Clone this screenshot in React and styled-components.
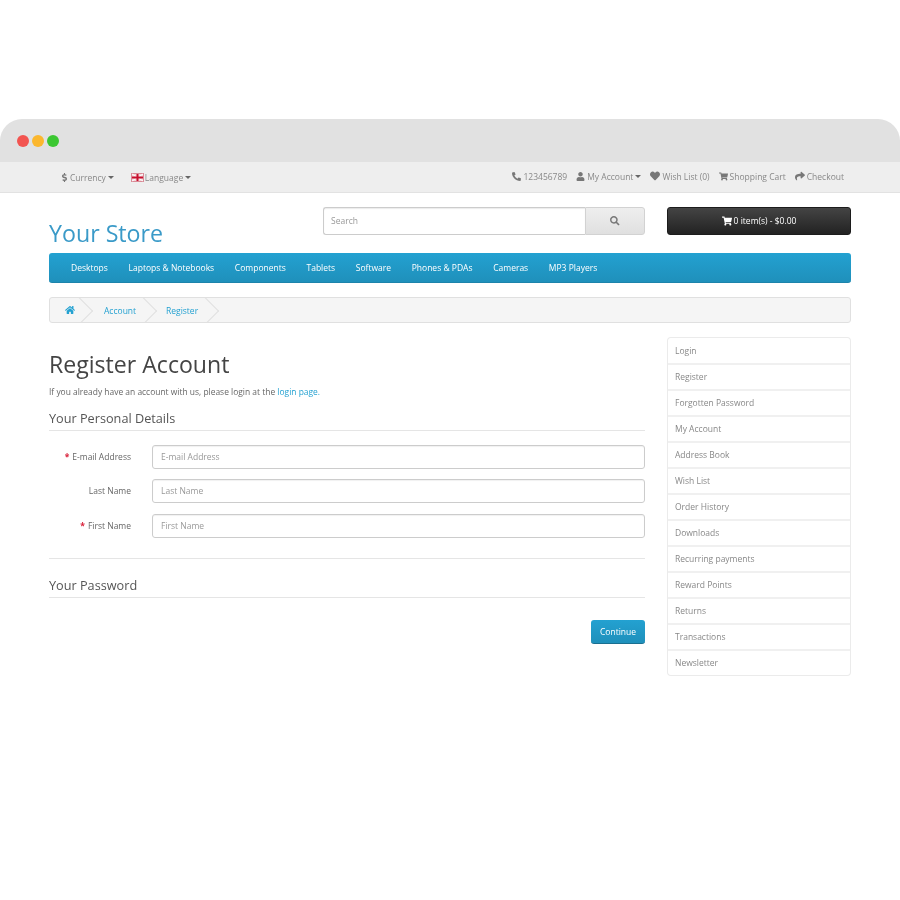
import React from 'react';
import styled, { createGlobalStyle } from 'styled-components';
import { FaPhoneAlt, FaUser, FaHeart, FaShoppingCart, FaShare, FaHome, FaSearch, FaDollarSign } from 'react-icons/fa';

const Global = createGlobalStyle`
  html, body { margin: 0; padding: 0; background: #fff; }
  body { font-family: "Open Sans", "Liberation Sans", sans-serif; font-size: 8.5px; color: #666; }
  * { box-sizing: border-box; }
`;

const Page = styled.div`
  width: 900px;
  height: 900px;
  padding-top: 119px;
  overflow: hidden;
  filter: blur(0.3px);
`;
const Chrome = styled.div`
  height: 43px;
  background: #e1e1e1;
  border-radius: 22px 22px 0 0;
  display: flex;
  align-items: center;
  gap: 3px;
  padding: 1px 0 0 17px;
`;
const Dot = styled.span`
  width: 12px;
  height: 12px;
  border-radius: 50%;
  background: ${p => p.$color};
`;
const TopBar = styled.div`
  height: 31px;
  background: #eee;
  border-bottom: 1px solid #e2e2e2;
  display: flex;
  align-items: center;
  justify-content: space-between;
  padding: 0 56px 2px 60px;
  color: #888;
`;
const TopGroup = styled.div`
  display: flex;
  align-items: center;
  gap: ${p => p.$gap}px;
`;
const TopItem = styled.span`
  display: inline-flex;
  align-items: center;
  gap: 2px;
  white-space: nowrap;
  font-size: 8.5px;
  transform: translateY(${p => p.$dy || 0}px);
  svg { font-size: ${p => p.$icon || 9}px; color: #777; }
`;
const Dollar = styled(FaDollarSign)`
  margin-right: -1px;
`;
const FlagIcon = styled.svg`
  margin-right: -1px;
`;
const Caret = styled.span`
  width: 0;
  height: 0;
  border-left: 3px solid transparent;
  border-right: 3px solid transparent;
  border-top: 3px solid #666;
`;
const Main = styled.div`
  padding: 14px 49px 0;
`;
const Header = styled.div`
  display: flex;
  align-items: flex-start;
  height: 46px;
`;
const Logo = styled.div`
  width: 274px;
  padding-top: 11px;
  font-size: 23.2px;
  line-height: 30px;
  color: #3a9ac8;
`;
const Search = styled.div`
  width: 322px;
  height: 28px;
  display: flex;
`;
const SearchInput = styled.div`
  flex: 1;
  border: 1px solid #ccc;
  border-right: 0;
  border-radius: 3px 0 0 3px;
  padding: 0 7px;
  line-height: 26px;
  font-size: 8.5px;
  color: #999;
  box-shadow: inset 0 1px 1px rgba(0,0,0,.08);
`;
const SearchButton = styled.div`
  width: 60px;
  border: 1px solid #d2d2d2;
  border-radius: 0 3px 3px 0;
  background: linear-gradient(#eee, #e0e0e0);
  display: flex;
  align-items: center;
  justify-content: center;
  color: #777;
  font-size: 9.5px;
`;
const Cart = styled.div`
  margin-left: 22px;
  width: 184px;
  height: 28px;
  padding-bottom: 1px;
  border-radius: 3px;
  background: linear-gradient(#444, #222);
  border: 1px solid #1c1c1c;
  color: #fff;
  display: flex;
  align-items: center;
  justify-content: center;
  gap: 2px;
  font-size: 8.5px;
  svg { font-size: 10px; }
`;
const Nav = styled.nav`
  height: 30px;
  border-radius: 3px;
  background: linear-gradient(#23a1d1, #1f90bb);
  border-bottom: 1px solid #1d84ab;
  display: flex;
  align-items: center;
  gap: 20.700px;
  padding: 0 22px 1px;
`;
const NavLink = styled.a`
  color: #fff;
  font-size: 8.5px;
  white-space: nowrap;
`;
const Crumbs = styled.div`
  margin-top: 14px;
  height: 26px;
  border: 1px solid #e0e0e0;
  border-radius: 3px;
  background: #f5f5f5;
  display: flex;
  align-items: center;
  overflow: hidden;
`;
const Crumb = styled.a`
  position: relative;
  height: 100%;
  width: ${p => p.$w}px;
  padding-left: ${p => p.$pad}px;
  display: flex;
  align-items: center;
  color: #23a1d1;
  font-size: 8.5px;
  &::after {
    content: '';
    position: absolute;
    right: 0;
    top: 2.500px;
    width: 19px;
    height: 19px;
    border-top: 1px solid #e0e0e0;
    border-right: 1px solid #e0e0e0;
    transform: rotate(45deg);
  }
`;
const Columns = styled.div`
  display: flex;
  gap: 22px;
  margin-top: 15px;
`;
const Content = styled.div`
  width: 596px;
`;
const Title = styled.h1`
  margin: 10px 0 0;
  font-size: 23.1px;
  line-height: 32px;
  font-weight: 400;
  color: #444;
`;
const Intro = styled.p`
  margin: 5px 0 0;
  font-size: 8.450px;
  line-height: 13px;
  color: #666;
`;
const InlineLink = styled.a`
  color: #23a1d1;
`;
const Legend = styled.div`
  margin-top: ${p => p.$top}px;
  font-size: 12.7px;
  line-height: 18px;
  height: 26px;
  padding-top: 4px;
  color: #555;
  border-bottom: 1px solid #e5e5e5;
`;
const Fields = styled.div`
  display: flex;
  flex-direction: column;
  gap: 10.500px;
  margin-top: 13.500px;
  padding-bottom: 20.500px;
  border-bottom: 1px solid #e5e5e5;
`;
const Field = styled.div`
  display: flex;
  align-items: center;
  height: 24px;
`;
const Label = styled.label`
  width: 82px;
  padding-bottom: 1px;
  text-align: right;
  font-size: 8.5px;
  color: #666;
  flex: none;
`;
const Star = styled.span`
  color: #d9233c;
  font-weight: 700;
  margin-right: 3px;
`;
const Input = styled.div`
  margin-left: 21px;
  width: 493px;
  height: 24px;
  border: 1px solid #ccc;
  border-radius: 3px;
  padding: 0 8px;
  line-height: 22px;
  font-size: 8.5px;
  color: #999;
  box-shadow: inset 0 1px 1px rgba(0,0,0,.06);
`;
const Actions = styled.div`
  display: flex;
  justify-content: flex-end;
  margin-top: 22px;
`;
const Continue = styled.button`
  width: 54px;
  height: 24px;
  padding: 0;
  border: 0;
  border-bottom: 1px solid #1a6f90;
  border-radius: 3px;
  background: linear-gradient(#23a1d1, #1f90bb);
  color: #fff;
  font: 8.5px "Open Sans", sans-serif;
`;
const Aside = styled.aside`
  width: 182px;
  margin-left: 1px;
  border-radius: 3px;
  box-shadow: 0 0 0 1px #ebebeb;
  align-self: flex-start;
`;
const AsideLink = styled.a`
  display: block;
  height: 26px;
  line-height: 23px;
  padding: 0 7px;
  font-size: 8.5px;
  color: #888;
  border-top: 2px solid #f0f0f0;
  &:first-child {
    height: 25px;
    line-height: 25px;
    border-top: 0;
  }
`;

const Flag = () => (
  <FlagIcon width="13" height="9" viewBox="0 0 13 9" aria-hidden="true">
    <rect width="13" height="9" fill="#d98a96" />
    <rect x="1" y="1" width="11" height="7" fill="#f3d6da" />
    <path d="M1 1l11 7M12 1L1 8" stroke="#fff" strokeWidth="1" />
    <path d="M6.500 1v7M1 4.500h11" stroke="#c8102e" strokeWidth="2" />
  </FlagIcon>
);

const navItems = ['Desktops', 'Laptops & Notebooks', 'Components', 'Tablets', 'Software', 'Phones & PDAs', 'Cameras', 'MP3 Players'];
const asideItems = ['Login', 'Register', 'Forgotten Password', 'My Account', 'Address Book', 'Wish List', 'Order History', 'Downloads', 'Recurring payments', 'Reward Points', 'Returns', 'Transactions', 'Newsletter'];

export default function App() {
  return (
    <Page>
      <Global />
      <Chrome>
        <Dot $color="#f25450" />
        <Dot $color="#fbb72e" />
        <Dot $color="#3cc732" />
      </Chrome>
      <TopBar>
        <TopGroup $gap={17}>
          <TopItem $dy={1}><Dollar />Currency<Caret /></TopItem>
          <TopItem $dy={1}><Flag />Language<Caret /></TopItem>
        </TopGroup>
        <TopGroup $gap={9}>
          <TopItem><FaPhoneAlt />123456789</TopItem>
          <TopItem><FaUser />My Account<Caret /></TopItem>
          <TopItem $icon={10}><FaHeart />Wish List (0)</TopItem>
          <TopItem><FaShoppingCart />Shopping Cart</TopItem>
          <TopItem $icon={10}><FaShare />Checkout</TopItem>
        </TopGroup>
      </TopBar>
      <Main>
        <Header>
          <Logo>Your Store</Logo>
          <Search>
            <SearchInput>Search</SearchInput>
            <SearchButton><FaSearch /></SearchButton>
          </Search>
          <Cart><FaShoppingCart />0 item(s) - $0.00</Cart>
        </Header>
        <Nav>
          {navItems.map(i => <NavLink key={i}>{i}</NavLink>)}
        </Nav>
        <Crumbs>
          <Crumb $w={39} $pad={15}><FaHome size={10} /></Crumb>
          <Crumb $w={64} $pad={15}>Account</Crumb>
          <Crumb $w={62} $pad={13}>Register</Crumb>
        </Crumbs>
        <Columns>
          <Content>
            <Title>Register Account</Title>
            <Intro>If you already have an account with us, please login at the <InlineLink>login page.</InlineLink></Intro>
            <Legend $top={7}>Your Personal Details</Legend>
            <Fields>
              <Field><Label><Star>*</Star>E-mail Address</Label><Input>E-mail Address</Input></Field>
              <Field><Label>Last Name</Label><Input>Last Name</Input></Field>
              <Field><Label><Star>*</Star>First Name</Label><Input>First Name</Input></Field>
            </Fields>
            <Legend $top={13}>Your Password</Legend>
            <Actions><Continue>Continue</Continue></Actions>
          </Content>
          <Aside>
            {asideItems.map(i => <AsideLink key={i}>{i}</AsideLink>)}
          </Aside>
        </Columns>
      </Main>
    </Page>
  );
}
